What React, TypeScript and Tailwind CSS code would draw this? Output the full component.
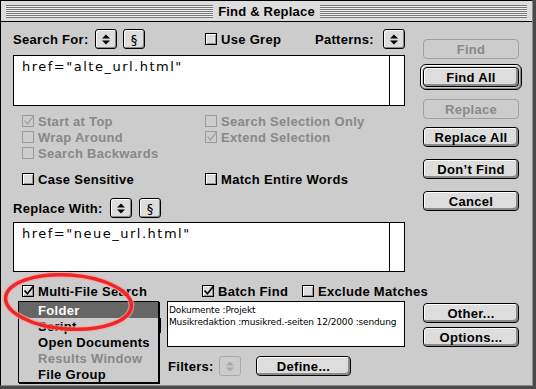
import React from "react";

const FONT = "font-['Liberation_Sans',Arial,sans-serif]";
const MONO = "font-['DejaVu_Sans',Verdana,sans-serif]";

function CheckBox({ checked = false, disabled = false }: { checked?: boolean; disabled?: boolean }) {
  return (
    <span
      className={`relative inline-block w-[12px] h-[12px] shrink-0 border ${
        disabled
          ? "border-[#9a9a9a] bg-[#cccccc]"
          : "border-black bg-[#dddddd] shadow-[inset_1px_1px_0_#ffffff,inset_-1px_-1px_0_#999999]"
      }`}
    >
      {checked && (
        <svg className="absolute left-[0px] top-[-1px]" width="12" height="12" viewBox="0 0 12 12">
          <path
            d="M1.5 5.5 L4.5 8.8 L10.5 1"
            fill="none"
            stroke={disabled ? "#9a9a9a" : "#000"}
            strokeWidth={disabled ? 1.1 : 1.7}
          />
        </svg>
      )}
    </span>
  );
}

function CheckItem({ label, checked, disabled }: { label: string; checked?: boolean; disabled?: boolean }) {
  return (
    <div className={`flex items-center gap-[4px] h-[12px] shrink-0 ${disabled ? "text-[#888888]" : "text-black"}`}>
      <CheckBox checked={checked} disabled={disabled} />
      <span className="leading-none whitespace-nowrap">{label}</span>
    </div>
  );
}

function PopArrow({ disabled = false }: { disabled?: boolean }) {
  return (
    <div
      className={`w-[22px] h-[20px] rounded-[3px] border flex items-center justify-center shrink-0 ${
        disabled
          ? "border-[#a8a8a8] bg-[#cccccc]"
          : "border-black bg-[#dddddd] shadow-[inset_1px_1px_0_#ffffff,inset_-1px_-1px_0_#888888]"
      }`}
    >
      <svg width="8" height="11" viewBox="0 0 8 11">
        <path d="M0 4.5 L4 0.5 L8 4.5Z M0 6.5 L4 10.5 L8 6.5Z" fill={disabled ? "#a8a8a8" : "#000"} />
      </svg>
    </div>
  );
}

function Sect() {
  return (
    <div className="w-[22px] h-[20px] rounded-[3px] border border-black bg-[#dddddd] shadow-[inset_1px_1px_0_#ffffff,inset_-1px_-1px_0_#888888] flex items-center justify-center shrink-0">
      <span className={`${MONO} font-normal text-[13px] leading-none tracking-normal`}>§</span>
    </div>
  );
}

function Btn({ label, disabled = false, w = "w-[96px]" }: { label: string; disabled?: boolean; w?: string }) {
  return (
    <div
      className={`${w} h-[20px] shrink-0 rounded-[4px] border flex items-center justify-center leading-none whitespace-nowrap ${
        disabled
          ? "border-[#a0a0a0] text-[#8a8a8a] bg-[#cccccc]"
          : "border-black text-black bg-[#dddddd] shadow-[inset_1px_1px_0_#ffffff,inset_-2px_-2px_0_#8a8a8a]"
      }`}
    >
      {label}
    </div>
  );
}

function TextBox({ text, h }: { text: string; h: string }) {
  return (
    <div className={`${h} border border-black bg-white flex`}>
      <div className={`flex-1 pl-[8px] pt-[3px] ${MONO} font-normal text-[13px] leading-[16px] tracking-[1.5px] whitespace-nowrap`}>
        {text}
      </div>
      <div className="w-[15px] border-l border-black" />
    </div>
  );
}

const Stripes = () => (
  <div className="flex-1 h-[13px] bg-[repeating-linear-gradient(to_bottom,#777777_0px,#777777_1px,#f2f2f2_1px,#f2f2f2_2px)]" />
);

export default function App() {
  const menuItems = [
    { t: "Folder", sel: true },
    { t: "Script" },
    { t: "Open Documents" },
    { t: "Results Window", dis: true },
    { t: "File Group" },
  ];
  return (
    <div className={`relative w-[536px] h-[389px] bg-[#4a4a4a] ${FONT} font-bold text-[13px] tracking-[0.3px] text-black overflow-hidden`}>
      <div className="w-[533px] h-[386px] border border-l-black border-t-black border-r-[#8a8a8a] border-b-[#8a8a8a] bg-[#cccccc] flex flex-col">
        {/* title bar */}
        <div className="h-[21px] shrink-0 border-b border-black bg-[#dddddd] flex items-center px-[5px] gap-[4px]">
          <Stripes />
          <span className="leading-none whitespace-nowrap px-[1px] tracking-[0.2px]">Find &amp; Replace</span>
          <Stripes />
        </div>

        {/* body */}
        <div className="flex pl-[12px]">
          {/* left column */}
          <div className="w-[392px] shrink-0 flex flex-col pt-[7px]">
            <div className="flex items-center h-[20px]">
              <div className="w-[82px] shrink-0 leading-none whitespace-nowrap">Search For:</div>
              <PopArrow />
              <div className="ml-[6px] shrink-0">
                <Sect />
              </div>
              <div className="ml-[60px] shrink-0">
                <CheckItem label="Use Grep" />
              </div>
              <div className="ml-auto flex items-center gap-[9px]">
                <span className="leading-none">Patterns:</span>
                <PopArrow />
              </div>
            </div>

            <div className="mt-[6px]">
              <TextBox text={'href="alte_url.html"'} h="h-[51px]" />
            </div>

            <div className="mt-[9px] pl-[9px] flex">
              <div className="w-[183px] shrink-0 flex flex-col gap-[4px]">
                <CheckItem label="Start at Top" checked disabled />
                <CheckItem label="Wrap Around" disabled />
                <CheckItem label="Search Backwards" disabled />
              </div>
              <div className="flex flex-col gap-[4px]">
                <CheckItem label="Search Selection Only" disabled />
                <CheckItem label="Extend Selection" checked disabled />
              </div>
            </div>

            <div className="mt-[14px] pl-[9px] flex">
              <div className="w-[183px] shrink-0">
                <CheckItem label="Case Sensitive" />
              </div>
              <CheckItem label="Match Entire Words" />
            </div>

            <div className="mt-[13px] flex items-center h-[20px]">
              <div className="w-[97px] shrink-0 leading-none whitespace-nowrap">Replace With:</div>
              <PopArrow />
              <div className="ml-[7px] shrink-0">
                <Sect />
              </div>
            </div>

            <div className="mt-[4px]">
              <TextBox text={'href="neue_url.html"'} h="h-[50px]" />
            </div>

            <div className="mt-[13px] pl-[9px] flex">
              <div className="w-[180px] shrink-0">
                <CheckItem label="Multi-File Search" checked />
              </div>
              <div className="w-[100px] shrink-0">
                <CheckItem label="Batch Find" checked />
              </div>
              <CheckItem label="Exclude Matches" />
            </div>

            <div className="mt-[4px] relative flex flex-col">
              <div className="flex">
                <div className="w-[154px] shrink-0" />
                <div className={`w-[238px] h-[46px] shrink-0 border border-black bg-white pl-[1px] pt-[2px] ${MONO} font-normal text-[9px] leading-[12px] tracking-[-0.15px] whitespace-nowrap overflow-hidden`}>
                  <div>Dokumente :Projekt</div>
                  <div>Musikredaktion :musikred.-seiten 12/2000 :sendung</div>
                </div>
              </div>
              <div className="mt-[9px] flex items-center h-[20px] pl-[155px]">
                <span className="w-[51px] shrink-0 leading-none whitespace-nowrap">Filters:</span>
                <PopArrow disabled />
                <div className="ml-[15px] shrink-0">
                  <Btn label="Define..." w="w-[95px]" />
                </div>
              </div>

              {/* underlying popup edge */}
              <div className="absolute left-[146px] top-[17px] w-[2px] h-[15px] bg-black" />

              {/* open popup menu */}
              <div className="absolute left-[5px] top-0 w-[141px] border border-black bg-[#cccccc] shadow-[1px_1px_0_#000000]">
                {menuItems.map((m) => (
                  <div
                    key={m.t}
                    className={`h-[16px] pl-[19px] flex items-center leading-none whitespace-nowrap ${
                      m.sel ? "bg-[#666666] text-white" : m.dis ? "text-[#888888]" : "text-black"
                    }`}
                  >
                    {m.t}
                  </div>
                ))}
              </div>
            </div>
          </div>

          {/* right column */}
          <div className="ml-[15px] w-[102px] shrink-0 flex flex-col items-center">
            <div className="mt-[17px]">
              <Btn label="Find" disabled />
            </div>
            <div className="mt-[5px] w-[102px] h-[26px] rounded-[6px] border border-black bg-[#cccccc] p-[2px] shadow-[inset_1px_1px_0_#ffffff,inset_-1px_-1px_0_#888888]">
              <Btn label="Find All" />
            </div>
            <div className="mt-[9px]">
              <Btn label="Replace" disabled />
            </div>
            <div className="mt-[8px]">
              <Btn label="Replace All" />
            </div>
            <div className="mt-[12px]">
              <Btn label="Don’t Find" />
            </div>
            <div className="mt-[12px]">
              <Btn label="Cancel" />
            </div>
            <div className="mt-[92px]">
              <Btn label="Other..." />
            </div>
            <div className="mt-[4px]">
              <Btn label="Options..." />
            </div>
          </div>
        </div>
      </div>

      {/* red annotation ellipse */}
      <svg className="absolute inset-0 pointer-events-none" width="536" height="389" viewBox="0 0 536 389">
        <ellipse cx="68.5" cy="302" rx="63" ry="27" transform="rotate(4 68.5 302)" fill="none" stroke="#f6a0a0" strokeWidth="6" opacity="0.7" />
        <ellipse cx="68.5" cy="302" rx="63" ry="27" transform="rotate(4 68.5 302)" fill="none" stroke="#ee2626" strokeWidth="3.5" />
      </svg>
    </div>
  );
}
